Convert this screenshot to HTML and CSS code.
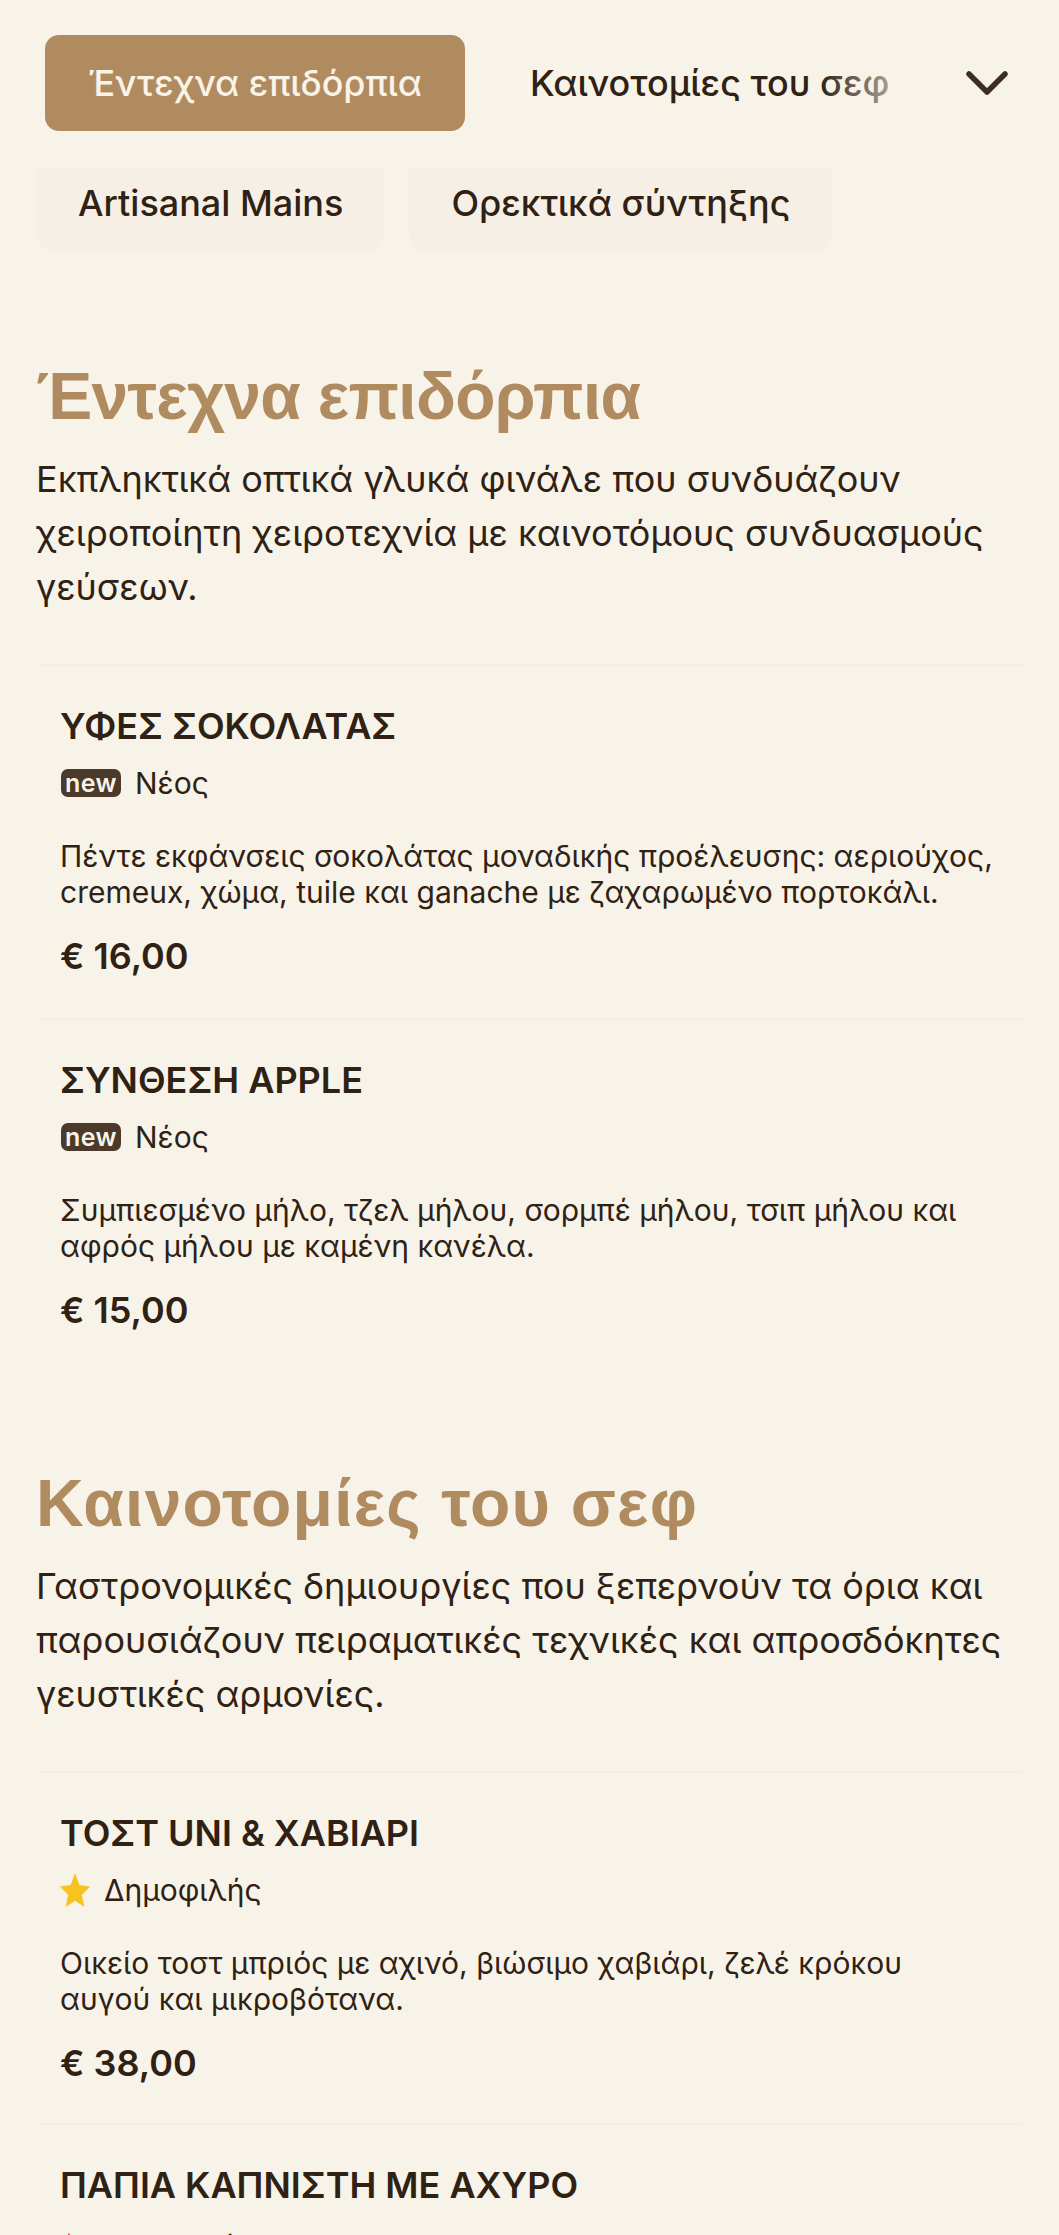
FILE: index.html
```html
<!DOCTYPE html>
<html lang="el">
<head>
<meta charset="utf-8">
<title>Μενού</title>
<link rel="stylesheet" href="styles.css">
</head>
<body>
<header class="topbar">
  <nav class="tabs">
    <a class="tab tab-active">Έντεχνα επιδόρπια</a>
    <a class="tab">Καινοτομίες του σεφ</a>
  </nav>
  <div class="more">
    <svg class="chev" viewBox="0 0 44 28" width="44" height="28"><path d="M4 5 L22 23 L40 5" fill="none" stroke="#3d2e1f" stroke-width="5.500" stroke-linecap="round" stroke-linejoin="round"/></svg>
  </div>
</header>
<div class="subtabs">
  <a class="subtab">Artisanal Mains</a>
  <a class="subtab">Ορεκτικά σύντηξης</a>
</div>
<main>
  <section class="section">
    <h2 class="title-tight">Έντεχνα επιδόρπια</h2>
    <p class="lead">Εκπληκτικά οπτικά γλυκά φινάλε που συνδυάζουν χειροποίητη χειροτεχνία με καινοτόμους συνδυασμούς γεύσεων.</p>
    <article class="item">
      <h3>ΥΦΕΣ ΣΟΚΟΛΑΤΑΣ</h3>
      <div class="tag"><span class="badge">new</span><span>Νέος</span></div>
      <p class="desc">Πέντε εκφάνσεις σοκολάτας μοναδικής προέλευσης: αεριούχος, cremeux, χώμα, tuile και ganache με ζαχαρωμένο πορτοκάλι.</p>
      <div class="price">€ 16,00</div>
    </article>
    <article class="item">
      <h3>ΣΥΝΘΕΣΗ APPLE</h3>
      <div class="tag"><span class="badge">new</span><span>Νέος</span></div>
      <p class="desc">Συμπιεσμένο μήλο, τζελ μήλου, σορμπέ μήλου, τσιπ μήλου και αφρός μήλου με καμένη κανέλα.</p>
      <div class="price">€ 15,00</div>
    </article>
  </section>
  <section class="section">
    <h2 class="title-wide">Καινοτομίες του σεφ</h2>
    <p class="lead">Γαστρονομικές δημιουργίες που ξεπερνούν τα όρια και παρουσιάζουν πειραματικές τεχνικές και απροσδόκητες γευστικές αρμονίες.</p>
    <article class="item item-snug">
      <h3>ΤΟΣΤ UNI &amp; ΧΑΒΙΑΡΙ</h3>
      <div class="tag"><svg class="icon" viewBox="0 0 24 24" preserveAspectRatio="none"><path d="M12 0l3.500 8.500 8.500 1-6.500 6 2 8.500-7.500-4.500-7.500 4.500 2-8.500-6.500-6 8.500-1z" fill="#f9c31f"/></svg><span>Δημοφιλής</span></div>
      <p class="desc">Οικείο τοστ μπριός με αχινό, βιώσιμο χαβιάρι, ζελέ κρόκου αυγού και μικροβότανα.</p>
      <div class="price">€ 38,00</div>
    </article>
    <article class="item">
      <h3>ΠΑΠΙΑ ΚΑΠΝΙΣΤΗ ΜΕ ΑΧΥΡΟ</h3>
      <div class="tag tag-low"><svg class="icon" viewBox="0 0 30 32"><path d="M9 3c2 3 1 6 3 8 6 2 12 8 14 18-10-1-20-8-20-17 0-3 1-6 3-9z" fill="#d23b2f"/></svg><span>Καπνιστό</span></div>
    </article>
  </section>
</main>
</body>
</html>
```
FILE: styles.css
```css
* { box-sizing: border-box; }
html, body { margin: 0; height: 2235px; overflow: hidden; }
body { background: #f8f3e9; color: #2f2214; font-family: Inter, "Noto Sans", sans-serif; }

.topbar { position: relative; z-index: 2; height: 168px; display: flex; align-items: center; background: #f8f3e9; border-bottom: 2px solid #f6f1e7; overflow: hidden; }
.tabs { display: flex; align-items: center; gap: 49px; padding-left: 45px; flex: 1; white-space: nowrap; }
.tab { font-size: 36px; line-height: 96px; height: 96px; padding: 0 44px; font-weight: 500; border-radius: 14px; }
.tab + .tab { padding: 0 16px; }
.tab-active { background: #b18b60; color: #f9f3e8; font-size: 35.8px; padding: 0 43px; }
.more { position: absolute; right: 0; top: 0; bottom: 0; width: 240px; display: flex; align-items: center; justify-content: flex-end; padding-right: 50px; background: linear-gradient(to right, rgba(248,243,233,0), rgba(248,243,233,0.6) 30%, #f8f3e9 45%); }
.chev { display: block; }

.subtabs { display: flex; gap: 24px; padding: 0 36px; margin-top: -24px; }
.subtab { height: 108px; line-height: 96px; padding: 11px 42px 0; font-size: 36px; font-weight: 500; background: #f6efe5; border-radius: 20px; }

.section { padding: 0 36px; margin-top: 106px; }
.section + .section { margin-top: 132px; }
h2 { margin: 0; font-family: "Liberation Sans", Arial, sans-serif; font-size: 66px; line-height: 76px; font-weight: 700; color: #b18b60; }
.title-tight { letter-spacing: -0.7px; }
.title-wide { letter-spacing: 1.2px; }
.lead { margin: 18px 0 0; font-size: 36px; line-height: 54px; padding-bottom: 50px; }
.item { border-top: 2px solid #f4efe4; padding: 36px 24px 39px; }
.item-snug { padding-bottom: 37px; }
.section .item:last-child { padding-bottom: 0; }
h3 { margin: 0; font-size: 36px; line-height: 48px; font-weight: 600; }
.tag { display: flex; align-items: center; gap: 14px; font-size: 30px; line-height: 40px; margin-top: 13px; }
.tag-low { margin-top: 17px; }
.badge { display: block; margin-left: 1px; background: #4b3a2a; color: #f8f3e9; font-size: 25px; font-weight: 600; letter-spacing: 0.4px; line-height: 28px; width: 60px; text-align: center; border-radius: 7px; }
.icon { display: block; width: 30px; height: 34px; margin: -4px 0; }
.desc { margin: 35px 0 0; font-size: 30px; line-height: 36px; }
.price { margin-top: 23px; font-size: 36px; line-height: 46px; font-weight: 600; }
```
